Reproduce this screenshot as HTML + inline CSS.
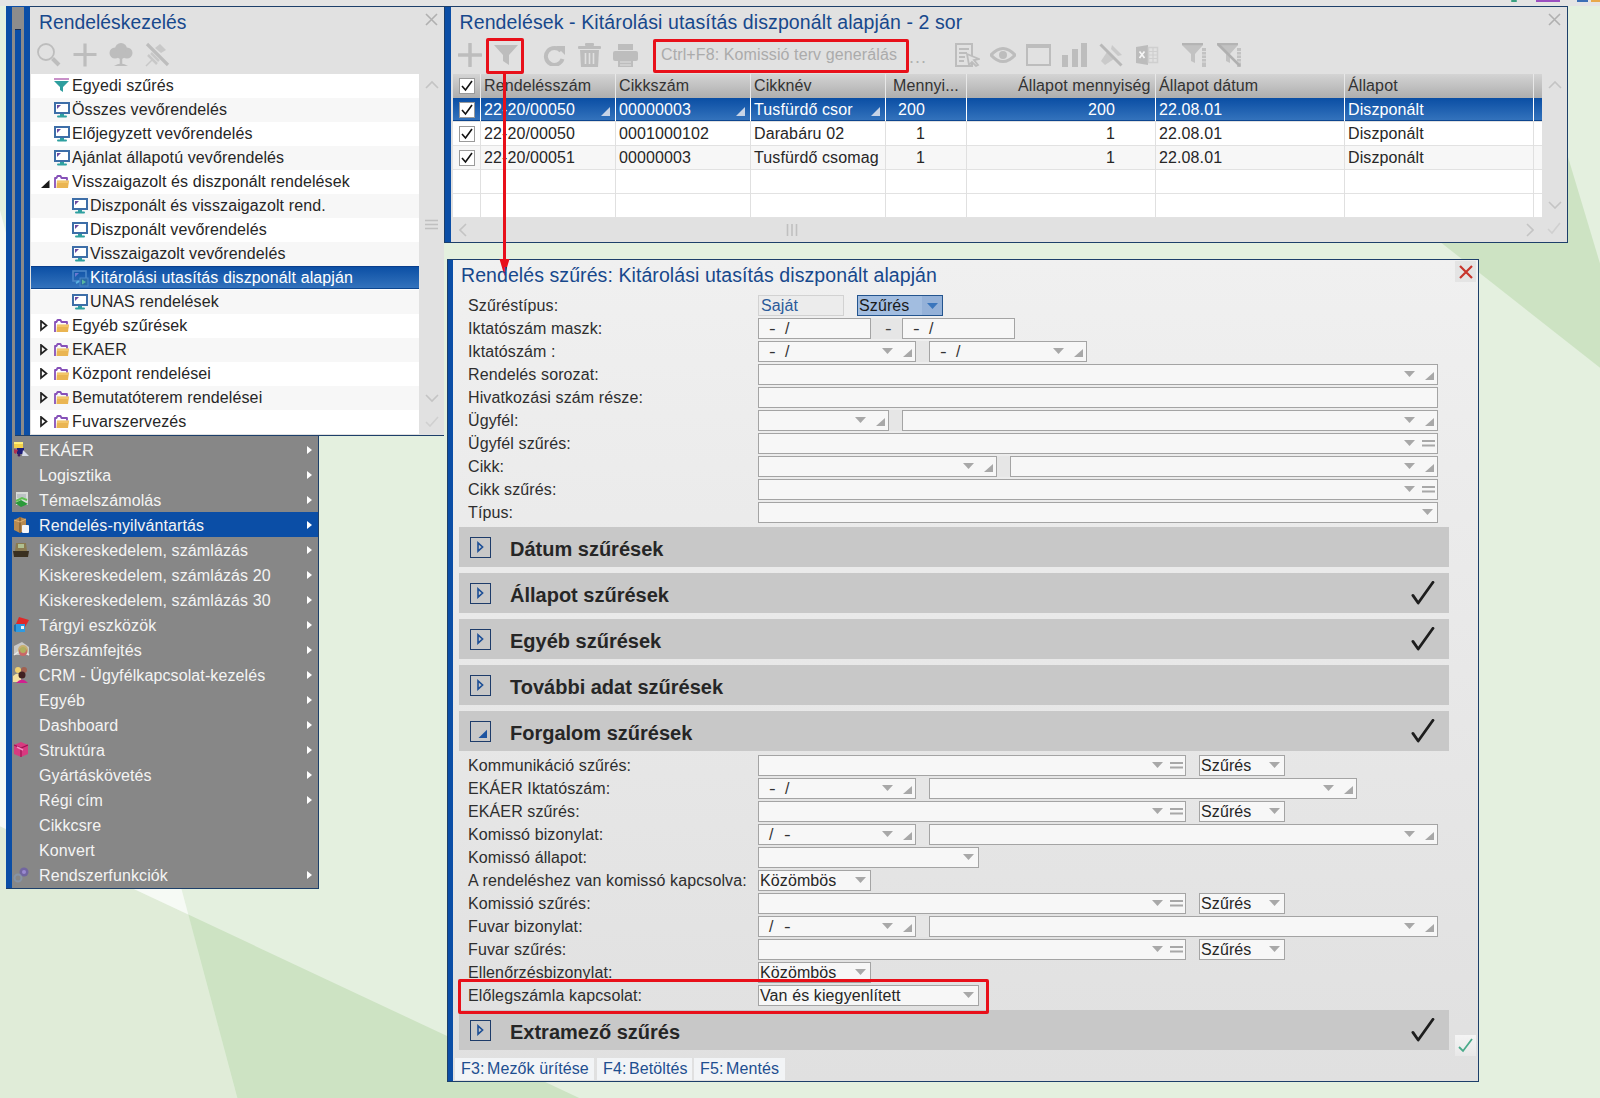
<!DOCTYPE html>
<html><head><meta charset="utf-8"><style>
html,body{margin:0;padding:0;}
body{width:1600px;height:1098px;overflow:hidden;position:relative;font-family:"Liberation Sans", sans-serif;background:#e2eedb;}
.t{position:absolute;white-space:nowrap;line-height:1;letter-spacing:0.11px;}
.r{position:absolute;display:block;}
</style></head><body>
<svg class="r" style="left:0;top:0" width="1600" height="1098" viewBox="0 0 1600 1098"><rect width="1600" height="1098" fill="#e4f0df"/><polygon points="188.3,914.6 0,826.3 0,1098 237.3,1098" fill="#e0ecd8"/><polygon points="188.3,914.6 0,826.3 0,210.4" fill="#f6faf5"/><polygon points="188.3,914.6 1600,1577 291.4,1300" fill="#cde3c3"/><polygon points="1641,400 1200,53 1200,-1068" fill="#cde3c3"/></svg>
<div class="r" style="left:0px;top:0px;width:1600px;height:6px;background:#e4e4e4"></div>
<div class="r" style="left:1511px;top:0px;width:6px;height:2px;background:#3aa080;border-radius:3px"></div>
<div class="r" style="left:1536px;top:0px;width:24px;height:2px;background:#9b4fc0"></div>
<div class="r" style="left:1577px;top:0px;width:11px;height:2px;background:#3b6fb6"></div>
<div class="r" style="left:1591px;top:0px;width:9px;height:2px;background:#e8a84a"></div>
<div class="r" style="left:6px;top:6px;width:6px;height:882px;background:#0b4ea6"></div>
<div class="r" style="left:12px;top:6px;width:18px;height:430px;background:#0b4ea6"></div>
<div class="r" style="left:12px;top:7px;width:12px;height:22px;background:#8c8c8c"></div>
<div class="r" style="left:12px;top:29px;width:3px;height:407px;background:#8a8a8a"></div>
<div class="r" style="left:21px;top:29px;width:3px;height:407px;background:#8a8a8a"></div>
<div class="r" style="left:15px;top:29px;width:6px;height:1px;background:#1a2f50"></div>
<div class="r" style="left:30px;top:6px;width:414px;height:1px;background:#1d3f6a"></div>
<div class="r" style="left:30px;top:7px;width:414px;height:428px;background:#e1e1e1"></div>
<div class="r" style="left:15px;top:435px;width:429px;height:1px;background:#1d3f6a"></div>
<div class="t" style="left:39px;top:13.16px;font-size:19.3px;color:#17488c;letter-spacing:0.04px">Rendeléskezelés</div>
<svg class="r" style="left:425px;top:13px;" width="13" height="13" viewBox="0 0 13 13"><path d="M1 1L12 12M12 1L1 12" stroke="#b0b0b0" stroke-width="1.6"/></svg>
<svg class="r" style="left:36px;top:42px;" width="26" height="26" viewBox="0 0 26 26"><circle cx="10" cy="10" r="8" fill="none" stroke="#bdbdbd" stroke-width="1.8"/><path d="M16.5 16.5L23 23" stroke="#bdbdbd" stroke-width="4"/></svg>
<svg class="r" style="left:73px;top:43px;" width="24" height="24" viewBox="0 0 24 24"><path d="M12 0.5V23.5M0.5 11.5H23.5" stroke="#bdbdbd" stroke-width="3.2"/></svg>
<svg class="r" style="left:108px;top:42px;" width="26" height="25" viewBox="0 0 26 25"><circle cx="13" cy="7" r="6" fill="#bdbdbd"/><circle cx="7" cy="11" r="5.5" fill="#bdbdbd"/><circle cx="19" cy="11" r="5.5" fill="#bdbdbd"/><circle cx="13" cy="12" r="5" fill="#bdbdbd"/><path d="M13 12V23" stroke="#bdbdbd" stroke-width="2.5"/><path d="M6 24Q13 19 20 24Z" fill="#bdbdbd"/></svg>
<svg class="r" style="left:144px;top:42px;" width="26" height="26" viewBox="0 0 26 26"><path d="M3 2L24 23" stroke="#bdbdbd" stroke-width="3.2"/><path d="M16 2L22 8L17 11L11 6Z" fill="#c8c8c8"/><path d="M4 13L13 22M7 11L15 19" stroke="#c8c8c8" stroke-width="2.5"/><path d="M2 24L8 18" stroke="#c8c8c8" stroke-width="1.5"/></svg>
<div class="r" style="left:31px;top:74px;width:388px;height:360px;background:#ffffff"></div>
<div class="r" style="left:419px;top:74px;width:25px;height:361px;background:#e1e1e1"></div>
<svg class="r" style="left:425px;top:80px;" width="14" height="9" viewBox="0 0 14 9"><path d="M1 8L7 2L13 8" fill="none" stroke="#c4c4c4" stroke-width="1.6"/></svg>
<svg class="r" style="left:425px;top:219px;" width="13" height="11" viewBox="0 0 13 11"><path d="M0 1.5H13M0 5.5H13M0 9.5H13" stroke="#c0c0c0" stroke-width="1.6"/></svg>
<svg class="r" style="left:425px;top:394px;" width="14" height="9" viewBox="0 0 14 9"><path d="M1 1L7 7L13 1" fill="none" stroke="#c4c4c4" stroke-width="1.6"/></svg>
<svg class="r" style="left:425px;top:416px;" width="14" height="12" viewBox="0 0 14 12"><path d="M1 6L5 10L13 1" fill="none" stroke="#d0d0d0" stroke-width="1.6"/></svg>
<svg class="r" style="left:54px;top:78px;" width="15" height="15" viewBox="0 0 15 15"><rect x="0" y="0" width="15" height="2" fill="#c890c8"/><path d="M0 3H15L9 9V14L6 12V9Z" fill="#2e9e9e"/></svg>
<div class="t" style="left:72px;top:78.16px;font-size:16px;color:#262626;">Egyedi szűrés</div>
<div class="r" style="left:31px;top:98px;width:388px;height:24px;background:#f7f7f7"></div>
<svg class="r" style="left:54px;top:102px;" width="16" height="16" viewBox="0 0 16 16"><rect x="1" y="1" width="14" height="10" fill="#fff" stroke="#3d6ea8" stroke-width="2"/><path d="M3 3H7L3 7Z" fill="#6a4aa0"/><rect x="6" y="12" width="4" height="2" fill="#2ea0a0"/><rect x="3" y="13.5" width="10" height="2" rx="1" fill="#2ea0a0"/></svg>
<div class="t" style="left:72px;top:102.16px;font-size:16px;color:#262626;">Összes vevőrendelés</div>
<svg class="r" style="left:54px;top:126px;" width="16" height="16" viewBox="0 0 16 16"><rect x="1" y="1" width="14" height="10" fill="#fff" stroke="#3d6ea8" stroke-width="2"/><path d="M3 3H7L3 7Z" fill="#6a4aa0"/><rect x="6" y="12" width="4" height="2" fill="#2ea0a0"/><rect x="3" y="13.5" width="10" height="2" rx="1" fill="#2ea0a0"/></svg>
<div class="t" style="left:72px;top:126.16px;font-size:16px;color:#262626;">Előjegyzett vevőrendelés</div>
<div class="r" style="left:31px;top:146px;width:388px;height:24px;background:#f7f7f7"></div>
<svg class="r" style="left:54px;top:150px;" width="16" height="16" viewBox="0 0 16 16"><rect x="1" y="1" width="14" height="10" fill="#fff" stroke="#3d6ea8" stroke-width="2"/><path d="M3 3H7L3 7Z" fill="#6a4aa0"/><rect x="6" y="12" width="4" height="2" fill="#2ea0a0"/><rect x="3" y="13.5" width="10" height="2" rx="1" fill="#2ea0a0"/></svg>
<div class="t" style="left:72px;top:150.16px;font-size:16px;color:#262626;">Ajánlat állapotú vevőrendelés</div>
<svg class="r" style="left:54px;top:175px;" width="16" height="14" viewBox="0 0 16 14"><path d="M1 13V3H2.5L3.5 1H6.5L7.5 3H13V5.5" fill="none" stroke="#8650b8" stroke-width="1.8" stroke-linejoin="round"/><path d="M3 5.5H15L14 13H2.5Z" fill="#eab552"/><path d="M3 6H14.5L14.2 8H3Z" fill="#f2c66a"/></svg>
<svg class="r" style="left:41px;top:180px;" width="9" height="8" viewBox="0 0 9 8"><path d="M8.5 0V8H0Z" fill="#1a1a1a"/></svg>
<div class="t" style="left:72px;top:174.16px;font-size:16px;color:#262626;">Visszaigazolt és diszponált rendelések</div>
<div class="r" style="left:31px;top:194px;width:388px;height:24px;background:#f7f7f7"></div>
<svg class="r" style="left:72px;top:198px;" width="16" height="16" viewBox="0 0 16 16"><rect x="1" y="1" width="14" height="10" fill="#fff" stroke="#3d6ea8" stroke-width="2"/><path d="M3 3H7L3 7Z" fill="#6a4aa0"/><rect x="6" y="12" width="4" height="2" fill="#2ea0a0"/><rect x="3" y="13.5" width="10" height="2" rx="1" fill="#2ea0a0"/></svg>
<div class="t" style="left:90px;top:198.16px;font-size:16px;color:#262626;">Diszponált és visszaigazolt rend.</div>
<svg class="r" style="left:72px;top:222px;" width="16" height="16" viewBox="0 0 16 16"><rect x="1" y="1" width="14" height="10" fill="#fff" stroke="#3d6ea8" stroke-width="2"/><path d="M3 3H7L3 7Z" fill="#6a4aa0"/><rect x="6" y="12" width="4" height="2" fill="#2ea0a0"/><rect x="3" y="13.5" width="10" height="2" rx="1" fill="#2ea0a0"/></svg>
<div class="t" style="left:90px;top:222.16px;font-size:16px;color:#262626;">Diszponált vevőrendelés</div>
<div class="r" style="left:31px;top:242px;width:388px;height:24px;background:#f7f7f7"></div>
<svg class="r" style="left:72px;top:246px;" width="16" height="16" viewBox="0 0 16 16"><rect x="1" y="1" width="14" height="10" fill="#fff" stroke="#3d6ea8" stroke-width="2"/><path d="M3 3H7L3 7Z" fill="#6a4aa0"/><rect x="6" y="12" width="4" height="2" fill="#2ea0a0"/><rect x="3" y="13.5" width="10" height="2" rx="1" fill="#2ea0a0"/></svg>
<div class="t" style="left:90px;top:246.16px;font-size:16px;color:#262626;">Visszaigazolt vevőrendelés</div>
<div class="r" style="left:31px;top:266px;width:388px;height:23px;background:linear-gradient(#0a4ea4,#3574bd)"></div>
<div class="r" style="left:31px;top:266px;width:388px;height:1px;background:#0a3f8c"></div>
<div class="r" style="left:31px;top:288px;width:388px;height:1px;background:#0d468f"></div>
<svg class="r" style="left:72px;top:270px;" width="17" height="17" viewBox="0 0 17 17"><rect x="1" y="1" width="13" height="10" fill="none" stroke="#4a86c8" stroke-width="1.6"/><path d="M3 3H7L3 7Z" fill="#6a78d0"/><path d="M4 13Q6 12 7 11" stroke="#5ab0e0" stroke-width="2" fill="none"/><rect x="8" y="8" width="8" height="8" fill="#2a6aa8" stroke="#4a86c8" stroke-width="1"/><path d="M10 9.5L14 12L10 14.5Z" fill="#5ab8a0"/></svg>
<div class="t" style="left:90px;top:270.16px;font-size:16px;color:#ffffff;">Kitárolási utasítás diszponált alapján</div>
<div class="r" style="left:31px;top:290px;width:388px;height:24px;background:#f7f7f7"></div>
<svg class="r" style="left:72px;top:294px;" width="16" height="16" viewBox="0 0 16 16"><rect x="1" y="1" width="14" height="10" fill="#fff" stroke="#3d6ea8" stroke-width="2"/><path d="M3 3H7L3 7Z" fill="#6a4aa0"/><rect x="6" y="12" width="4" height="2" fill="#2ea0a0"/><rect x="3" y="13.5" width="10" height="2" rx="1" fill="#2ea0a0"/></svg>
<div class="t" style="left:90px;top:294.16px;font-size:16px;color:#262626;">UNAS rendelések</div>
<svg class="r" style="left:54px;top:319px;" width="16" height="14" viewBox="0 0 16 14"><path d="M1 13V3H2.5L3.5 1H6.5L7.5 3H13V5.5" fill="none" stroke="#8650b8" stroke-width="1.8" stroke-linejoin="round"/><path d="M3 5.5H15L14 13H2.5Z" fill="#eab552"/><path d="M3 6H14.5L14.2 8H3Z" fill="#f2c66a"/></svg>
<svg class="r" style="left:40px;top:320px;" width="8" height="12" viewBox="0 0 8 12"><path d="M1 1L6.5 5.5L1 10Z" fill="none" stroke="#222" stroke-width="1.7" stroke-linejoin="miter"/></svg>
<div class="t" style="left:72px;top:318.16px;font-size:16px;color:#262626;">Egyéb szűrések</div>
<div class="r" style="left:31px;top:338px;width:388px;height:24px;background:#f7f7f7"></div>
<svg class="r" style="left:54px;top:343px;" width="16" height="14" viewBox="0 0 16 14"><path d="M1 13V3H2.5L3.5 1H6.5L7.5 3H13V5.5" fill="none" stroke="#8650b8" stroke-width="1.8" stroke-linejoin="round"/><path d="M3 5.5H15L14 13H2.5Z" fill="#eab552"/><path d="M3 6H14.5L14.2 8H3Z" fill="#f2c66a"/></svg>
<svg class="r" style="left:40px;top:344px;" width="8" height="12" viewBox="0 0 8 12"><path d="M1 1L6.5 5.5L1 10Z" fill="none" stroke="#222" stroke-width="1.7" stroke-linejoin="miter"/></svg>
<div class="t" style="left:72px;top:342.16px;font-size:16px;color:#262626;">EKAER</div>
<svg class="r" style="left:54px;top:367px;" width="16" height="14" viewBox="0 0 16 14"><path d="M1 13V3H2.5L3.5 1H6.5L7.5 3H13V5.5" fill="none" stroke="#8650b8" stroke-width="1.8" stroke-linejoin="round"/><path d="M3 5.5H15L14 13H2.5Z" fill="#eab552"/><path d="M3 6H14.5L14.2 8H3Z" fill="#f2c66a"/></svg>
<svg class="r" style="left:40px;top:368px;" width="8" height="12" viewBox="0 0 8 12"><path d="M1 1L6.5 5.5L1 10Z" fill="none" stroke="#222" stroke-width="1.7" stroke-linejoin="miter"/></svg>
<div class="t" style="left:72px;top:366.16px;font-size:16px;color:#262626;">Központ rendelései</div>
<div class="r" style="left:31px;top:386px;width:388px;height:24px;background:#f7f7f7"></div>
<svg class="r" style="left:54px;top:391px;" width="16" height="14" viewBox="0 0 16 14"><path d="M1 13V3H2.5L3.5 1H6.5L7.5 3H13V5.5" fill="none" stroke="#8650b8" stroke-width="1.8" stroke-linejoin="round"/><path d="M3 5.5H15L14 13H2.5Z" fill="#eab552"/><path d="M3 6H14.5L14.2 8H3Z" fill="#f2c66a"/></svg>
<svg class="r" style="left:40px;top:392px;" width="8" height="12" viewBox="0 0 8 12"><path d="M1 1L6.5 5.5L1 10Z" fill="none" stroke="#222" stroke-width="1.7" stroke-linejoin="miter"/></svg>
<div class="t" style="left:72px;top:390.16px;font-size:16px;color:#262626;">Bemutatóterem rendelései</div>
<svg class="r" style="left:54px;top:415px;" width="16" height="14" viewBox="0 0 16 14"><path d="M1 13V3H2.5L3.5 1H6.5L7.5 3H13V5.5" fill="none" stroke="#8650b8" stroke-width="1.8" stroke-linejoin="round"/><path d="M3 5.5H15L14 13H2.5Z" fill="#eab552"/><path d="M3 6H14.5L14.2 8H3Z" fill="#f2c66a"/></svg>
<svg class="r" style="left:40px;top:416px;" width="8" height="12" viewBox="0 0 8 12"><path d="M1 1L6.5 5.5L1 10Z" fill="none" stroke="#222" stroke-width="1.7" stroke-linejoin="miter"/></svg>
<div class="t" style="left:72px;top:414.16px;font-size:16px;color:#262626;">Fuvarszervezés</div>
<div class="r" style="left:12px;top:436px;width:306px;height:452px;background:#878787"></div>
<div class="r" style="left:318px;top:436px;width:1px;height:452px;background:#1d3f6a"></div>
<div class="r" style="left:6px;top:888px;width:313px;height:1px;background:#1d3f6a"></div>
<svg class="r" style="left:13px;top:441px;" width="17" height="18" viewBox="0 0 17 18"><rect x="1" y="1" width="9" height="6" fill="#f2d04a"/><rect x="1" y="1" width="9" height="2" fill="#fff07a"/><path d="M4 7H11V13H4Z" fill="#1c1c78"/><path d="M1 8L5 9L3 13L1 12Z" fill="#b03050"/><path d="M10 9L16 15H9Z" fill="#d8dce8"/><circle cx="6" cy="14" r="1.5" fill="#402060"/></svg>
<div class="t" style="left:39px;top:443.46px;font-size:16px;color:#f4f4f4;">EKÁER</div>
<svg class="r" style="left:307px;top:446px;" width="6" height="8" viewBox="0 0 6 8"><path d="M0 0L5 4L0 8Z" fill="#ffffff"/></svg>
<div class="t" style="left:39px;top:468.46px;font-size:16px;color:#f4f4f4;">Logisztika</div>
<svg class="r" style="left:307px;top:471px;" width="6" height="8" viewBox="0 0 6 8"><path d="M0 0L5 4L0 8Z" fill="#ffffff"/></svg>
<svg class="r" style="left:13px;top:491px;" width="17" height="18" viewBox="0 0 17 18"><rect x="3" y="1" width="12" height="13" fill="#d8dcd8"/><path d="M4 4H13M4 6H13" stroke="#a0a8b0" stroke-width="1"/><path d="M2 12L8 9L15 13L8 16Z" fill="#2a9a3a"/><path d="M3 10L9 7L14 9" fill="none" stroke="#60c050" stroke-width="2"/></svg>
<div class="t" style="left:39px;top:493.46px;font-size:16px;color:#f4f4f4;">Témaelszámolás</div>
<svg class="r" style="left:307px;top:496px;" width="6" height="8" viewBox="0 0 6 8"><path d="M0 0L5 4L0 8Z" fill="#ffffff"/></svg>
<div class="r" style="left:12px;top:512px;width:306px;height:25px;background:#0b4ea6"></div>
<svg class="r" style="left:13px;top:516px;" width="17" height="18" viewBox="0 0 17 18"><path d="M1 4L7 1L13 3V14L7 17L1 14Z" fill="#b88a50"/><path d="M7 1V17" stroke="#8a6030" stroke-width="1.5"/><path d="M1 4L7 6L13 3" fill="none" stroke="#e0b070" stroke-width="1"/><rect x="9" y="9" width="7" height="8" rx="1" fill="#f4f4f8"/></svg>
<div class="t" style="left:39px;top:518.46px;font-size:16px;color:#f4f4f4;">Rendelés-nyilvántartás</div>
<svg class="r" style="left:307px;top:521px;" width="6" height="8" viewBox="0 0 6 8"><path d="M0 0L5 4L0 8Z" fill="#ffffff"/></svg>
<svg class="r" style="left:13px;top:541px;" width="17" height="18" viewBox="0 0 17 18"><path d="M3 2H13L14 10H2Z" fill="#8a7a50"/><rect x="5" y="3" width="6" height="4" fill="#b0c090"/><path d="M0 10H16L15 16H1Z" fill="#3a3020"/></svg>
<div class="t" style="left:39px;top:543.46px;font-size:16px;color:#f4f4f4;">Kiskereskedelem, számlázás</div>
<svg class="r" style="left:307px;top:546px;" width="6" height="8" viewBox="0 0 6 8"><path d="M0 0L5 4L0 8Z" fill="#ffffff"/></svg>
<div class="t" style="left:39px;top:568.46px;font-size:16px;color:#f4f4f4;">Kiskereskedelem, számlázás 20</div>
<svg class="r" style="left:307px;top:571px;" width="6" height="8" viewBox="0 0 6 8"><path d="M0 0L5 4L0 8Z" fill="#ffffff"/></svg>
<div class="t" style="left:39px;top:593.46px;font-size:16px;color:#f4f4f4;">Kiskereskedelem, számlázás 30</div>
<svg class="r" style="left:307px;top:596px;" width="6" height="8" viewBox="0 0 6 8"><path d="M0 0L5 4L0 8Z" fill="#ffffff"/></svg>
<svg class="r" style="left:13px;top:616px;" width="17" height="18" viewBox="0 0 17 18"><path d="M6 1L16 4L12 11L3 8Z" fill="#e02828"/><path d="M3 8H12V16H3Z" fill="#2f9ae0"/><path d="M1 9L3 8V16L1 15Z" fill="#1870b0"/><rect x="8" y="10" width="3" height="3" fill="#f0f0f0"/></svg>
<div class="t" style="left:39px;top:618.46px;font-size:16px;color:#f4f4f4;">Tárgyi eszközök</div>
<svg class="r" style="left:307px;top:621px;" width="6" height="8" viewBox="0 0 6 8"><path d="M0 0L5 4L0 8Z" fill="#ffffff"/></svg>
<svg class="r" style="left:13px;top:641px;" width="17" height="18" viewBox="0 0 17 18"><path d="M1 5L9 1L16 6V14H1Z" fill="#c8c8c8"/><path d="M1 14L8 9L16 14" fill="none" stroke="#e8e8e8" stroke-width="1.5"/><circle cx="10" cy="9" r="5" fill="#c8b070"/><circle cx="10" cy="11" r="4" fill="#c86868"/><circle cx="10" cy="9" r="3" fill="#b0b060"/></svg>
<div class="t" style="left:39px;top:643.46px;font-size:16px;color:#f4f4f4;">Bérszámfejtés</div>
<svg class="r" style="left:307px;top:646px;" width="6" height="8" viewBox="0 0 6 8"><path d="M0 0L5 4L0 8Z" fill="#ffffff"/></svg>
<svg class="r" style="left:13px;top:666px;" width="17" height="18" viewBox="0 0 17 18"><circle cx="5" cy="4" r="3" fill="#f0d070"/><circle cx="11" cy="4" r="3" fill="#a06050"/><path d="M0 10Q5 5 8 10V16H0Z" fill="#f4e0a0"/><circle cx="9" cy="9" r="3.5" fill="#402020"/><path d="M3 17Q9 10 15 17Z" fill="#d02090"/></svg>
<div class="t" style="left:39px;top:668.46px;font-size:16px;color:#f4f4f4;">CRM - Ügyfélkapcsolat-kezelés</div>
<svg class="r" style="left:307px;top:671px;" width="6" height="8" viewBox="0 0 6 8"><path d="M0 0L5 4L0 8Z" fill="#ffffff"/></svg>
<div class="t" style="left:39px;top:693.46px;font-size:16px;color:#f4f4f4;">Egyéb</div>
<svg class="r" style="left:307px;top:696px;" width="6" height="8" viewBox="0 0 6 8"><path d="M0 0L5 4L0 8Z" fill="#ffffff"/></svg>
<div class="t" style="left:39px;top:718.46px;font-size:16px;color:#f4f4f4;">Dashboard</div>
<svg class="r" style="left:307px;top:721px;" width="6" height="8" viewBox="0 0 6 8"><path d="M0 0L5 4L0 8Z" fill="#ffffff"/></svg>
<svg class="r" style="left:13px;top:741px;" width="17" height="18" viewBox="0 0 17 18"><path d="M8 1L15 4V13L8 16L1 13V4Z" fill="#d83a80"/><path d="M1 4L8 7L15 4M8 7V16" fill="none" stroke="#a01050" stroke-width="1.2"/><path d="M4 6L10 9" stroke="#f090c0" stroke-width="1.5"/></svg>
<div class="t" style="left:39px;top:743.46px;font-size:16px;color:#f4f4f4;">Struktúra</div>
<svg class="r" style="left:307px;top:746px;" width="6" height="8" viewBox="0 0 6 8"><path d="M0 0L5 4L0 8Z" fill="#ffffff"/></svg>
<div class="t" style="left:39px;top:768.46px;font-size:16px;color:#f4f4f4;">Gyártáskövetés</div>
<svg class="r" style="left:307px;top:771px;" width="6" height="8" viewBox="0 0 6 8"><path d="M0 0L5 4L0 8Z" fill="#ffffff"/></svg>
<div class="t" style="left:39px;top:793.46px;font-size:16px;color:#f4f4f4;">Régi cím</div>
<svg class="r" style="left:307px;top:796px;" width="6" height="8" viewBox="0 0 6 8"><path d="M0 0L5 4L0 8Z" fill="#ffffff"/></svg>
<div class="t" style="left:39px;top:818.46px;font-size:16px;color:#f4f4f4;">Cikkcsre</div>
<div class="t" style="left:39px;top:843.46px;font-size:16px;color:#f4f4f4;">Konvert</div>
<svg class="r" style="left:13px;top:866px;" width="17" height="18" viewBox="0 0 17 18"><circle cx="11" cy="6" r="4.5" fill="#6a5aa8" opacity="0.75"/><circle cx="11" cy="6" r="2" fill="#9a8ad0"/><circle cx="5" cy="12" r="3.5" fill="none" stroke="#8898b0" stroke-width="2" opacity="0.7"/></svg>
<div class="t" style="left:39px;top:868.46px;font-size:16px;color:#f4f4f4;">Rendszerfunkciók</div>
<svg class="r" style="left:307px;top:871px;" width="6" height="8" viewBox="0 0 6 8"><path d="M0 0L5 4L0 8Z" fill="#ffffff"/></svg>
<div class="r" style="left:444px;top:6px;width:1124px;height:1px;background:#1d3f6a"></div>
<div class="r" style="left:444px;top:6px;width:1px;height:237px;background:#1d3f6a"></div>
<div class="r" style="left:445px;top:7px;width:6px;height:235px;background:#0b4ea6"></div>
<div class="r" style="left:451px;top:7px;width:1116px;height:235px;background:#e1e1e1"></div>
<div class="r" style="left:1567px;top:6px;width:1px;height:237px;background:#1d3f6a"></div>
<div class="r" style="left:444px;top:242px;width:1124px;height:1px;background:#1d3f6a"></div>
<div class="t" style="left:459.5px;top:12.99px;font-size:19.5px;color:#17488c;">Rendelések - Kitárolási utasítás diszponált alapján - 2 sor</div>
<svg class="r" style="left:1548px;top:13px;" width="13" height="13" viewBox="0 0 13 13"><path d="M1 1L12 12M12 1L1 12" stroke="#b0b0b0" stroke-width="1.6"/></svg>
<svg class="r" style="left:458px;top:43px;" width="24" height="24" viewBox="0 0 24 24"><path d="M12 1V23M1 12H23" stroke="#bdbdbd" stroke-width="3.5" stroke-linecap="round"/></svg>
<svg class="r" style="left:493px;top:44px;" width="26" height="22" viewBox="0 0 26 22"><path d="M1 1H25L16 11V21L10 17V11Z" fill="#bdbdbd"/></svg>
<svg class="r" style="left:543px;top:45px;" width="23" height="21" viewBox="0 0 23 21"><path d="M18 6A8.5 8.5 0 1 0 19.5 14" fill="none" stroke="#bdbdbd" stroke-width="4"/><path d="M13 1H22V10Z" fill="#bdbdbd"/></svg>
<svg class="r" style="left:577px;top:43px;" width="25" height="24" viewBox="0 0 25 24"><rect x="1" y="3" width="23" height="3" rx="1" fill="#bdbdbd"/><rect x="8" y="0" width="9" height="3" rx="1" fill="#bdbdbd"/><path d="M3 7H22L21 24H4Z" fill="#bdbdbd"/><path d="M8.5 10V21M12.5 10V21M16.5 10V21" stroke="#e1e1e1" stroke-width="1.6"/></svg>
<svg class="r" style="left:613px;top:44px;" width="25" height="23" viewBox="0 0 25 23"><rect x="5" y="0" width="15" height="6" fill="#bdbdbd"/><rect x="0" y="7" width="25" height="10" rx="2" fill="#bdbdbd"/><rect x="5" y="14" width="15" height="9" fill="#bdbdbd"/><path d="M7 18H18M7 21H18" stroke="#e1e1e1" stroke-width="1.2"/></svg>
<div class="r" style="left:486px;top:38px;width:38px;height:36px;border:3px solid #e8101a;box-sizing:border-box;border-radius:2px"></div>
<div class="r" style="left:653px;top:39px;width:256px;height:34px;border:3px solid #e8101a;box-sizing:border-box;border-radius:2px"></div>
<div class="t" style="left:661px;top:47.46px;font-size:16px;color:#ababab;">Ctrl+F8: Komissió terv generálás</div>
<div class="t" style="left:909px;top:47.76px;font-size:18px;color:#b0b0b0;letter-spacing:1px">...</div>
<svg class="r" style="left:955px;top:43px;" width="25" height="24" viewBox="0 0 25 24"><rect x="1" y="1" width="16" height="22" fill="none" stroke="#bdbdbd" stroke-width="2"/><path d="M4 6H14M4 10H12M4 14H10M4 18H9" stroke="#bdbdbd" stroke-width="2"/><path d="M12 11L24 16L19 17L23 22L21 23L17 19L14 22Z" fill="#e1e1e1" stroke="#bdbdbd" stroke-width="1.8"/></svg>
<svg class="r" style="left:990px;top:45px;" width="26" height="20" viewBox="0 0 26 20"><path d="M1 10Q13 -3 25 10Q13 23 1 10Z" fill="none" stroke="#bdbdbd" stroke-width="3"/><circle cx="13" cy="10" r="4" fill="#bdbdbd"/></svg>
<svg class="r" style="left:1026px;top:44px;" width="25" height="22" viewBox="0 0 25 22"><rect x="1" y="1" width="23" height="20" fill="none" stroke="#bdbdbd" stroke-width="2"/><rect x="1" y="1" width="23" height="3" fill="#bdbdbd"/></svg>
<svg class="r" style="left:1062px;top:43px;" width="26" height="24" viewBox="0 0 26 24"><rect x="0" y="12" width="6" height="12" fill="#bdbdbd"/><rect x="10" y="6" width="6" height="18" fill="#bdbdbd"/><rect x="19" y="0" width="6" height="24" fill="#bdbdbd"/></svg>
<svg class="r" style="left:1099px;top:43px;" width="25" height="24" viewBox="0 0 25 24"><path d="M13 2L23 12L19 13L12 6Z" fill="#cacaca"/><path d="M8 9L15 16L6 22L2 18Z" fill="#cacaca"/><path d="M1.5 1.5L22.5 22.5" stroke="#b8b8b8" stroke-width="3"/></svg>
<svg class="r" style="left:1135px;top:44px;" width="25" height="22" viewBox="0 0 25 22"><path d="M1 3L13 1V21L1 19Z" fill="#bcbcbc"/><path d="M4.5 7.5L9.5 14M9.5 7.5L4.5 14" stroke="#f6f6f6" stroke-width="1.7"/><rect x="13.5" y="3.5" width="9" height="15" fill="none" stroke="#cfcfcf" stroke-width="1.5"/><path d="M13 7.5H23M13 11H23M13 14.5H23M18 3V19" stroke="#cfcfcf" stroke-width="1.2"/></svg>
<svg class="r" style="left:1182px;top:43px;" width="25" height="25" viewBox="0 0 25 25"><path d="M0 2H21L13 11V20L9 18V11Z" fill="#c2c2c2"/><rect x="0" y="0" width="21" height="2.2" fill="#b4b4b4"/><rect x="20" y="5" width="4" height="19" fill="#c2c2c2"/><path d="M20 8.5H24M20 12H24M20 15.5H24M20 19H24" stroke="#dedede" stroke-width="1"/></svg>
<svg class="r" style="left:1217px;top:43px;" width="25" height="25" viewBox="0 0 25 25"><path d="M0 2H21L13 11V20L9 18V11Z" fill="#c2c2c2"/><rect x="0" y="0" width="21" height="2.2" fill="#b4b4b4"/><rect x="20" y="5" width="4" height="19" fill="#c2c2c2"/><path d="M20 8.5H24M20 12H24M20 15.5H24M20 19H24" stroke="#dedede" stroke-width="1"/><path d="M1 1L23 23" stroke="#b0b0b0" stroke-width="2.5"/></svg>
<div class="r" style="left:453px;top:74px;width:1089px;height:24px;background:linear-gradient(#d4d4d4,#aeaeae)"></div>
<div class="r" style="left:480px;top:74px;width:1px;height:24px;background:#e8e8e8"></div>
<div class="r" style="left:615px;top:74px;width:1px;height:24px;background:#e8e8e8"></div>
<div class="r" style="left:750px;top:74px;width:1px;height:24px;background:#e8e8e8"></div>
<div class="r" style="left:885px;top:74px;width:1px;height:24px;background:#e8e8e8"></div>
<div class="r" style="left:966px;top:74px;width:1px;height:24px;background:#e8e8e8"></div>
<div class="r" style="left:1155px;top:74px;width:1px;height:24px;background:#e8e8e8"></div>
<div class="r" style="left:1344px;top:74px;width:1px;height:24px;background:#e8e8e8"></div>
<div class="r" style="left:1533px;top:74px;width:1px;height:24px;background:#e8e8e8"></div>
<div class="r" style="left:453px;top:98px;width:1089px;height:23px;background:linear-gradient(#0a4ea4,#3574bd)"></div>
<div class="r" style="left:453px;top:120px;width:1089px;height:1px;background:#0d468f"></div>
<div class="r" style="left:453px;top:122px;width:1089px;height:24px;background:#ffffff"></div>
<div class="r" style="left:453px;top:145px;width:1089px;height:1px;background:#e2e2e2"></div>
<div class="r" style="left:453px;top:146px;width:1089px;height:24px;background:#f7f7f7"></div>
<div class="r" style="left:453px;top:169px;width:1089px;height:1px;background:#e2e2e2"></div>
<div class="r" style="left:453px;top:170px;width:1089px;height:24px;background:#ffffff"></div>
<div class="r" style="left:453px;top:193px;width:1089px;height:1px;background:#e2e2e2"></div>
<div class="r" style="left:453px;top:194px;width:1089px;height:24px;background:#ffffff"></div>
<div class="r" style="left:453px;top:217px;width:1089px;height:1px;background:#e2e2e2"></div>
<div class="r" style="left:480px;top:98px;width:1px;height:119px;background:#e0e0e0"></div>
<div class="r" style="left:615px;top:98px;width:1px;height:119px;background:#e0e0e0"></div>
<div class="r" style="left:750px;top:98px;width:1px;height:119px;background:#e0e0e0"></div>
<div class="r" style="left:885px;top:98px;width:1px;height:119px;background:#e0e0e0"></div>
<div class="r" style="left:966px;top:98px;width:1px;height:119px;background:#e0e0e0"></div>
<div class="r" style="left:1155px;top:98px;width:1px;height:119px;background:#e0e0e0"></div>
<div class="r" style="left:1344px;top:98px;width:1px;height:119px;background:#e0e0e0"></div>
<div class="r" style="left:1533px;top:98px;width:1px;height:119px;background:#e0e0e0"></div>
<div class="r" style="left:480px;top:98px;width:1px;height:23px;background:#ffffff"></div>
<div class="r" style="left:615px;top:98px;width:1px;height:23px;background:#ffffff"></div>
<div class="r" style="left:750px;top:98px;width:1px;height:23px;background:#ffffff"></div>
<div class="r" style="left:885px;top:98px;width:1px;height:23px;background:#ffffff"></div>
<div class="r" style="left:966px;top:98px;width:1px;height:23px;background:#ffffff"></div>
<div class="r" style="left:1155px;top:98px;width:1px;height:23px;background:#ffffff"></div>
<div class="r" style="left:1344px;top:98px;width:1px;height:23px;background:#ffffff"></div>
<div class="r" style="left:1533px;top:98px;width:1px;height:23px;background:#ffffff"></div>
<div class="r" style="left:459px;top:78px;width:16px;height:16px;background:#fff;border:1px solid #9a9a9a;box-sizing:border-box"></div>
<svg class="r" style="left:461px;top:80px;" width="12" height="12" viewBox="0 0 12 12"><path d="M1 6L4.5 10L11 1" fill="none" stroke="#111" stroke-width="1.6"/></svg>
<div class="r" style="left:459px;top:102px;width:16px;height:16px;background:#fff;border:1px solid #9a9a9a;box-sizing:border-box"></div>
<svg class="r" style="left:461px;top:104px;" width="12" height="12" viewBox="0 0 12 12"><path d="M1 6L4.5 10L11 1" fill="none" stroke="#111" stroke-width="1.6"/></svg>
<div class="r" style="left:459px;top:126px;width:16px;height:16px;background:#fff;border:1px solid #9a9a9a;box-sizing:border-box"></div>
<svg class="r" style="left:461px;top:128px;" width="12" height="12" viewBox="0 0 12 12"><path d="M1 6L4.5 10L11 1" fill="none" stroke="#111" stroke-width="1.6"/></svg>
<div class="r" style="left:459px;top:150px;width:16px;height:16px;background:#fff;border:1px solid #9a9a9a;box-sizing:border-box"></div>
<svg class="r" style="left:461px;top:152px;" width="12" height="12" viewBox="0 0 12 12"><path d="M1 6L4.5 10L11 1" fill="none" stroke="#111" stroke-width="1.6"/></svg>
<div class="t" style="left:484px;top:78.06px;font-size:16px;color:#333333;">Rendelésszám</div>
<div class="t" style="left:619px;top:78.06px;font-size:16px;color:#333333;">Cikkszám</div>
<div class="t" style="left:754px;top:78.06px;font-size:16px;color:#333333;">Cikknév</div>
<div class="t" style="left:893px;top:78.06px;font-size:16px;color:#333333;">Mennyi...</div>
<div class="t" style="left:1018px;top:78.06px;font-size:16px;color:#333333;">Állapot mennyiség</div>
<div class="t" style="left:1159px;top:78.06px;font-size:16px;color:#333333;">Állapot dátum</div>
<div class="t" style="left:1348px;top:78.06px;font-size:16px;color:#333333;">Állapot</div>
<div class="t" style="left:484px;top:101.96px;font-size:16px;color:#ffffff;">22-20/00050</div>
<div class="t" style="left:619px;top:101.96px;font-size:16px;color:#ffffff;">00000003</div>
<div class="t" style="left:754px;top:101.96px;font-size:16px;color:#ffffff;">Tusfürdő csor</div>
<div class="t" style="left:800px;width:125px;text-align:right;top:101.96px;font-size:16px;color:#ffffff">200</div>
<div class="t" style="left:1000px;width:115px;text-align:right;top:101.96px;font-size:16px;color:#ffffff">200</div>
<div class="t" style="left:1159px;top:101.96px;font-size:16px;color:#ffffff;">22.08.01</div>
<div class="t" style="left:1348px;top:101.96px;font-size:16px;color:#ffffff;">Diszponált</div>
<div class="t" style="left:484px;top:125.96px;font-size:16px;color:#262626;">22-20/00050</div>
<div class="t" style="left:619px;top:125.96px;font-size:16px;color:#262626;">0001000102</div>
<div class="t" style="left:754px;top:125.96px;font-size:16px;color:#262626;">Darabáru 02</div>
<div class="t" style="left:800px;width:125px;text-align:right;top:125.96px;font-size:16px;color:#262626">1</div>
<div class="t" style="left:1000px;width:115px;text-align:right;top:125.96px;font-size:16px;color:#262626">1</div>
<div class="t" style="left:1159px;top:125.96px;font-size:16px;color:#262626;">22.08.01</div>
<div class="t" style="left:1348px;top:125.96px;font-size:16px;color:#262626;">Diszponált</div>
<div class="t" style="left:484px;top:149.96px;font-size:16px;color:#262626;">22-20/00051</div>
<div class="t" style="left:619px;top:149.96px;font-size:16px;color:#262626;">00000003</div>
<div class="t" style="left:754px;top:149.96px;font-size:16px;color:#262626;">Tusfürdő csomag</div>
<div class="t" style="left:800px;width:125px;text-align:right;top:149.96px;font-size:16px;color:#262626">1</div>
<div class="t" style="left:1000px;width:115px;text-align:right;top:149.96px;font-size:16px;color:#262626">1</div>
<div class="t" style="left:1159px;top:149.96px;font-size:16px;color:#262626;">22.08.01</div>
<div class="t" style="left:1348px;top:149.96px;font-size:16px;color:#262626;">Diszponált</div>
<svg class="r" style="left:601px;top:107px;" width="9" height="9" viewBox="0 0 9 9"><path d="M9 0V9H0Z" fill="#c8d4e6"/></svg>
<svg class="r" style="left:736px;top:107px;" width="9" height="9" viewBox="0 0 9 9"><path d="M9 0V9H0Z" fill="#c8d4e6"/></svg>
<svg class="r" style="left:871px;top:107px;" width="9" height="9" viewBox="0 0 9 9"><path d="M9 0V9H0Z" fill="#c8d4e6"/></svg>
<svg class="r" style="left:1548px;top:81px;" width="14" height="8" viewBox="0 0 14 8"><path d="M1 7L7 1L13 7" fill="none" stroke="#c4c4c4" stroke-width="1.6"/></svg>
<svg class="r" style="left:1548px;top:201px;" width="14" height="8" viewBox="0 0 14 8"><path d="M1 1L7 7L13 1" fill="none" stroke="#c4c4c4" stroke-width="1.6"/></svg>
<svg class="r" style="left:459px;top:223px;" width="8" height="14" viewBox="0 0 8 14"><path d="M7 1L1 7L7 13" fill="none" stroke="#c4c4c4" stroke-width="1.6"/></svg>
<svg class="r" style="left:786px;top:224px;" width="12" height="12" viewBox="0 0 12 12"><path d="M1.5 0V12M6 0V12M10.5 0V12" stroke="#c0c0c0" stroke-width="1.6"/></svg>
<svg class="r" style="left:1526px;top:223px;" width="8" height="14" viewBox="0 0 8 14"><path d="M1 1L7 7L1 13" fill="none" stroke="#c4c4c4" stroke-width="1.6"/></svg>
<svg class="r" style="left:1547px;top:221px;" width="14" height="14" viewBox="0 0 14 14"><path d="M1 8L5 12L13 2" fill="none" stroke="#d0d0d0" stroke-width="1.6"/></svg>
<div class="r" style="left:503px;top:73px;width:3px;height:187px;background:#e8101a"></div>
<div class="r" style="left:447px;top:259px;width:1032px;height:1px;background:#1d3f6a"></div>
<div class="r" style="left:447px;top:259px;width:1px;height:823px;background:#1d3f6a"></div>
<div class="r" style="left:448px;top:260px;width:5px;height:821px;background:#0b4ea6"></div>
<div class="r" style="left:453px;top:260px;width:1025px;height:821px;background:linear-gradient(#f0f0f0,#e0e0e0)"></div>
<div class="r" style="left:1478px;top:259px;width:1px;height:823px;background:#1d3f6a"></div>
<div class="r" style="left:447px;top:1081px;width:1032px;height:1px;background:#1d3f6a"></div>
<svg class="r" style="left:499px;top:259px;" width="11" height="17" viewBox="0 0 11 17"><path d="M0.5 0L10.5 0L5.5 17Z" fill="#e8101a"/></svg>
<div class="t" style="left:461px;top:266.49px;font-size:19.5px;color:#17488c;letter-spacing:0.08px">Rendelés szűrés: Kitárolási utasítás diszponált alapján</div>
<div class="r" style="left:1455px;top:261px;width:21px;height:21px;background:#e4e4e4"></div>
<svg class="r" style="left:1459px;top:265px;" width="14" height="14" viewBox="0 0 14 14"><path d="M1 1L13 13M13 1L1 13" stroke="#c8362c" stroke-width="2.2"/></svg>
<div class="t" style="left:468px;top:298.26px;font-size:16px;color:#2e2e2e;">Szűréstípus:</div>
<div class="t" style="left:468px;top:321.26px;font-size:16px;color:#2e2e2e;">Iktatószám maszk:</div>
<div class="t" style="left:468px;top:344.26px;font-size:16px;color:#2e2e2e;">Iktatószám :</div>
<div class="t" style="left:468px;top:367.26px;font-size:16px;color:#2e2e2e;">Rendelés sorozat:</div>
<div class="t" style="left:468px;top:390.26px;font-size:16px;color:#2e2e2e;">Hivatkozási szám része:</div>
<div class="t" style="left:468px;top:413.26px;font-size:16px;color:#2e2e2e;">Ügyfél:</div>
<div class="t" style="left:468px;top:436.26px;font-size:16px;color:#2e2e2e;">Ügyfél szűrés:</div>
<div class="t" style="left:468px;top:459.26px;font-size:16px;color:#2e2e2e;">Cikk:</div>
<div class="t" style="left:468px;top:482.26px;font-size:16px;color:#2e2e2e;">Cikk szűrés:</div>
<div class="t" style="left:468px;top:505.26px;font-size:16px;color:#2e2e2e;">Típus:</div>
<div class="r" style="left:758px;top:295px;width:86px;height:21px;background:#ececec;border:1px solid #d2d2d2;box-sizing:border-box"></div>
<div class="t" style="left:761px;top:298.46px;font-size:16px;color:#2a5a9a;">Saját</div>
<div class="r" style="left:857px;top:295px;width:86px;height:21px;background:#a2bde0;border:1px solid #24558f;box-sizing:border-box"></div>
<div class="r" style="left:922px;top:296px;width:20px;height:19px;background:#94b1d8"></div>
<div class="t" style="left:859px;top:298.46px;font-size:16px;color:#1a1a1a;">Szűrés</div>
<svg class="r" style="left:927px;top:303px;" width="11" height="6" viewBox="0 0 11 6"><path d="M0 0H11L5.5 6Z" fill="#3a76bd"/></svg>
<div class="r" style="left:758px;top:318px;width:113px;height:21px;background:#f7f7f7;border:1px solid #a4a4a4;box-sizing:border-box;"></div>
<div class="t" style="left:769px;top:321.46px;font-size:16px;color:#333;transform:scaleX(1.25);transform-origin:left">-</div>
<div class="t" style="left:785px;top:321.46px;font-size:16px;color:#333;">/</div>
<div class="r" style="left:871px;top:318px;width:31px;height:21px;background:#e6e6e6"></div>
<div class="t" style="left:885px;top:321.46px;font-size:16px;color:#444;transform:scaleX(1.25);transform-origin:left">-</div>
<div class="r" style="left:902px;top:318px;width:113px;height:21px;background:#f7f7f7;border:1px solid #a4a4a4;box-sizing:border-box;"></div>
<div class="t" style="left:913px;top:321.46px;font-size:16px;color:#333;transform:scaleX(1.25);transform-origin:left">-</div>
<div class="t" style="left:929px;top:321.46px;font-size:16px;color:#333;">/</div>
<div class="r" style="left:758px;top:341px;width:158px;height:21px;background:#f7f7f7;border:1px solid #a4a4a4;box-sizing:border-box;"></div>
<svg class="r" style="left:882px;top:348px;" width="11" height="6" viewBox="0 0 11 6"><path d="M0 0H11L5.5 6Z" fill="#a8a8a8"/></svg>
<svg class="r" style="left:903px;top:349px;" width="9" height="8" viewBox="0 0 9 8"><path d="M9 0V8H0Z" fill="#a8a8a8"/></svg>
<div class="t" style="left:769px;top:344.46px;font-size:16px;color:#333;transform:scaleX(1.25);transform-origin:left">-</div>
<div class="t" style="left:785px;top:344.46px;font-size:16px;color:#333;">/</div>
<div class="r" style="left:916px;top:341px;width:13px;height:21px;background:#e6e6e6"></div>
<div class="r" style="left:929px;top:341px;width:158px;height:21px;background:#f7f7f7;border:1px solid #a4a4a4;box-sizing:border-box;"></div>
<svg class="r" style="left:1053px;top:348px;" width="11" height="6" viewBox="0 0 11 6"><path d="M0 0H11L5.5 6Z" fill="#a8a8a8"/></svg>
<svg class="r" style="left:1074px;top:349px;" width="9" height="8" viewBox="0 0 9 8"><path d="M9 0V8H0Z" fill="#a8a8a8"/></svg>
<div class="t" style="left:940px;top:344.46px;font-size:16px;color:#333;transform:scaleX(1.25);transform-origin:left">-</div>
<div class="t" style="left:956px;top:344.46px;font-size:16px;color:#333;">/</div>
<div class="r" style="left:758px;top:364px;width:680px;height:21px;background:#f7f7f7;border:1px solid #a4a4a4;box-sizing:border-box;"></div>
<svg class="r" style="left:1404px;top:371px;" width="11" height="6" viewBox="0 0 11 6"><path d="M0 0H11L5.5 6Z" fill="#a8a8a8"/></svg>
<svg class="r" style="left:1425px;top:372px;" width="9" height="8" viewBox="0 0 9 8"><path d="M9 0V8H0Z" fill="#a8a8a8"/></svg>
<div class="r" style="left:758px;top:387px;width:680px;height:21px;background:#f7f7f7;border:1px solid #a4a4a4;box-sizing:border-box;"></div>
<div class="r" style="left:758px;top:410px;width:131px;height:21px;background:#f7f7f7;border:1px solid #a4a4a4;box-sizing:border-box;"></div>
<svg class="r" style="left:855px;top:417px;" width="11" height="6" viewBox="0 0 11 6"><path d="M0 0H11L5.5 6Z" fill="#a8a8a8"/></svg>
<svg class="r" style="left:876px;top:418px;" width="9" height="8" viewBox="0 0 9 8"><path d="M9 0V8H0Z" fill="#a8a8a8"/></svg>
<div class="r" style="left:889px;top:410px;width:13px;height:21px;background:#e6e6e6"></div>
<div class="r" style="left:902px;top:410px;width:536px;height:21px;background:#f7f7f7;border:1px solid #a4a4a4;box-sizing:border-box;"></div>
<svg class="r" style="left:1404px;top:417px;" width="11" height="6" viewBox="0 0 11 6"><path d="M0 0H11L5.5 6Z" fill="#a8a8a8"/></svg>
<svg class="r" style="left:1425px;top:418px;" width="9" height="8" viewBox="0 0 9 8"><path d="M9 0V8H0Z" fill="#a8a8a8"/></svg>
<div class="r" style="left:758px;top:433px;width:680px;height:21px;background:#f7f7f7;border:1px solid #a4a4a4;box-sizing:border-box;"></div>
<svg class="r" style="left:1404px;top:440px;" width="11" height="6" viewBox="0 0 11 6"><path d="M0 0H11L5.5 6Z" fill="#a8a8a8"/></svg>
<svg class="r" style="left:1422px;top:440px;" width="13" height="7" viewBox="0 0 13 7"><path d="M0 1H13M0 5.5H13" stroke="#a8a8a8" stroke-width="2"/></svg>
<div class="r" style="left:758px;top:456px;width:239px;height:21px;background:#f7f7f7;border:1px solid #a4a4a4;box-sizing:border-box;"></div>
<svg class="r" style="left:963px;top:463px;" width="11" height="6" viewBox="0 0 11 6"><path d="M0 0H11L5.5 6Z" fill="#a8a8a8"/></svg>
<svg class="r" style="left:984px;top:464px;" width="9" height="8" viewBox="0 0 9 8"><path d="M9 0V8H0Z" fill="#a8a8a8"/></svg>
<div class="r" style="left:997px;top:456px;width:13px;height:21px;background:#e6e6e6"></div>
<div class="r" style="left:1010px;top:456px;width:428px;height:21px;background:#f7f7f7;border:1px solid #a4a4a4;box-sizing:border-box;"></div>
<svg class="r" style="left:1404px;top:463px;" width="11" height="6" viewBox="0 0 11 6"><path d="M0 0H11L5.5 6Z" fill="#a8a8a8"/></svg>
<svg class="r" style="left:1425px;top:464px;" width="9" height="8" viewBox="0 0 9 8"><path d="M9 0V8H0Z" fill="#a8a8a8"/></svg>
<div class="r" style="left:758px;top:479px;width:680px;height:21px;background:#f7f7f7;border:1px solid #a4a4a4;box-sizing:border-box;"></div>
<svg class="r" style="left:1404px;top:486px;" width="11" height="6" viewBox="0 0 11 6"><path d="M0 0H11L5.5 6Z" fill="#a8a8a8"/></svg>
<svg class="r" style="left:1422px;top:486px;" width="13" height="7" viewBox="0 0 13 7"><path d="M0 1H13M0 5.5H13" stroke="#a8a8a8" stroke-width="2"/></svg>
<div class="r" style="left:758px;top:502px;width:680px;height:21px;background:#f7f7f7;border:1px solid #a4a4a4;box-sizing:border-box;"></div>
<svg class="r" style="left:1422px;top:509px;" width="11" height="6" viewBox="0 0 11 6"><path d="M0 0H11L5.5 6Z" fill="#a8a8a8"/></svg>
<div class="r" style="left:459px;top:527px;width:990px;height:40px;background:#c8c8c8"></div>
<div class="r" style="left:470px;top:537px;width:21px;height:21px;border:1.3px solid #1e3c6a;box-sizing:border-box"></div>
<svg class="r" style="left:476px;top:541px;" width="9" height="12" viewBox="0 0 9 12"><path d="M2 1.8L6.6 6L2 10.2Z" fill="none" stroke="#1d4f96" stroke-width="1.6" stroke-linejoin="miter"/></svg>
<div class="t" style="left:510px;top:539.07px;font-size:20px;color:#262626;font-weight:bold;letter-spacing:0">Dátum szűrések</div>
<div class="r" style="left:459px;top:573px;width:990px;height:40px;background:#c8c8c8"></div>
<div class="r" style="left:470px;top:583px;width:21px;height:21px;border:1.3px solid #1e3c6a;box-sizing:border-box"></div>
<svg class="r" style="left:476px;top:587px;" width="9" height="12" viewBox="0 0 9 12"><path d="M2 1.8L6.6 6L2 10.2Z" fill="none" stroke="#1d4f96" stroke-width="1.6" stroke-linejoin="miter"/></svg>
<div class="t" style="left:510px;top:585.07px;font-size:20px;color:#262626;font-weight:bold;letter-spacing:0">Állapot szűrések</div>
<svg class="r" style="left:1410px;top:581px;" width="26" height="24" viewBox="0 0 26 24"><path d="M2.9 14.4L8.2 22L23 1.3" fill="none" stroke="#1e1e1e" stroke-width="2.8" stroke-linecap="round" stroke-linejoin="round"/></svg>
<div class="r" style="left:459px;top:619px;width:990px;height:40px;background:#c8c8c8"></div>
<div class="r" style="left:470px;top:629px;width:21px;height:21px;border:1.3px solid #1e3c6a;box-sizing:border-box"></div>
<svg class="r" style="left:476px;top:633px;" width="9" height="12" viewBox="0 0 9 12"><path d="M2 1.8L6.6 6L2 10.2Z" fill="none" stroke="#1d4f96" stroke-width="1.6" stroke-linejoin="miter"/></svg>
<div class="t" style="left:510px;top:631.07px;font-size:20px;color:#262626;font-weight:bold;letter-spacing:0">Egyéb szűrések</div>
<svg class="r" style="left:1410px;top:627px;" width="26" height="24" viewBox="0 0 26 24"><path d="M2.9 14.4L8.2 22L23 1.3" fill="none" stroke="#1e1e1e" stroke-width="2.8" stroke-linecap="round" stroke-linejoin="round"/></svg>
<div class="r" style="left:459px;top:665px;width:990px;height:40px;background:#c8c8c8"></div>
<div class="r" style="left:470px;top:675px;width:21px;height:21px;border:1.3px solid #1e3c6a;box-sizing:border-box"></div>
<svg class="r" style="left:476px;top:679px;" width="9" height="12" viewBox="0 0 9 12"><path d="M2 1.8L6.6 6L2 10.2Z" fill="none" stroke="#1d4f96" stroke-width="1.6" stroke-linejoin="miter"/></svg>
<div class="t" style="left:510px;top:677.07px;font-size:20px;color:#262626;font-weight:bold;letter-spacing:0">További adat szűrések</div>
<div class="r" style="left:459px;top:711px;width:990px;height:40px;background:#c8c8c8"></div>
<div class="r" style="left:470px;top:721px;width:21px;height:21px;border:1.3px solid #1e3c6a;box-sizing:border-box"></div>
<svg class="r" style="left:478px;top:729px;" width="10" height="10" viewBox="0 0 10 10"><path d="M9 0.8V9H0.5Z" fill="#1d54a0"/></svg>
<div class="t" style="left:510px;top:723.07px;font-size:20px;color:#262626;font-weight:bold;letter-spacing:0">Forgalom szűrések</div>
<svg class="r" style="left:1410px;top:719px;" width="26" height="24" viewBox="0 0 26 24"><path d="M2.9 14.4L8.2 22L23 1.3" fill="none" stroke="#1e1e1e" stroke-width="2.8" stroke-linecap="round" stroke-linejoin="round"/></svg>
<div class="t" style="left:468px;top:758.46px;font-size:16px;color:#2e2e2e;">Kommunikáció szűrés:</div>
<div class="t" style="left:468px;top:781.46px;font-size:16px;color:#2e2e2e;">EKÁER Iktatószám:</div>
<div class="t" style="left:468px;top:804.46px;font-size:16px;color:#2e2e2e;">EKÁER szűrés:</div>
<div class="t" style="left:468px;top:827.46px;font-size:16px;color:#2e2e2e;">Komissó bizonylat:</div>
<div class="t" style="left:468px;top:850.46px;font-size:16px;color:#2e2e2e;">Komissó állapot:</div>
<div class="t" style="left:468px;top:873.46px;font-size:16px;color:#2e2e2e;">A rendeléshez van komissó kapcsolva:</div>
<div class="t" style="left:468px;top:896.46px;font-size:16px;color:#2e2e2e;">Komissió szűrés:</div>
<div class="t" style="left:468px;top:919.46px;font-size:16px;color:#2e2e2e;">Fuvar bizonylat:</div>
<div class="t" style="left:468px;top:942.46px;font-size:16px;color:#2e2e2e;">Fuvar szűrés:</div>
<div class="t" style="left:468px;top:965.46px;font-size:16px;color:#2e2e2e;">Ellenőrzésbizonylat:</div>
<div class="t" style="left:468px;top:988.46px;font-size:16px;color:#2e2e2e;">Előlegszámla kapcsolat:</div>
<div class="r" style="left:758px;top:755px;width:428px;height:21px;background:#f7f7f7;border:1px solid #a4a4a4;box-sizing:border-box;"></div>
<svg class="r" style="left:1152px;top:762px;" width="11" height="6" viewBox="0 0 11 6"><path d="M0 0H11L5.5 6Z" fill="#a8a8a8"/></svg>
<svg class="r" style="left:1170px;top:762px;" width="13" height="7" viewBox="0 0 13 7"><path d="M0 1H13M0 5.5H13" stroke="#a8a8a8" stroke-width="2"/></svg>
<div class="r" style="left:1199px;top:755px;width:86px;height:21px;background:#f7f7f7;border:1px solid #a4a4a4;box-sizing:border-box;"></div>
<svg class="r" style="left:1269px;top:762px;" width="11" height="6" viewBox="0 0 11 6"><path d="M0 0H11L5.5 6Z" fill="#a8a8a8"/></svg>
<div class="t" style="left:1201px;top:758.46px;font-size:16px;color:#262626;">Szűrés</div>
<div class="r" style="left:758px;top:778px;width:158px;height:21px;background:#f7f7f7;border:1px solid #a4a4a4;box-sizing:border-box;"></div>
<svg class="r" style="left:882px;top:785px;" width="11" height="6" viewBox="0 0 11 6"><path d="M0 0H11L5.5 6Z" fill="#a8a8a8"/></svg>
<svg class="r" style="left:903px;top:786px;" width="9" height="8" viewBox="0 0 9 8"><path d="M9 0V8H0Z" fill="#a8a8a8"/></svg>
<div class="t" style="left:769px;top:781.46px;font-size:16px;color:#333;transform:scaleX(1.25);transform-origin:left">-</div>
<div class="t" style="left:785px;top:781.46px;font-size:16px;color:#333;">/</div>
<div class="r" style="left:916px;top:778px;width:13px;height:21px;background:#e6e6e6"></div>
<div class="r" style="left:929px;top:778px;width:428px;height:21px;background:#f7f7f7;border:1px solid #a4a4a4;box-sizing:border-box;"></div>
<svg class="r" style="left:1323px;top:785px;" width="11" height="6" viewBox="0 0 11 6"><path d="M0 0H11L5.5 6Z" fill="#a8a8a8"/></svg>
<svg class="r" style="left:1344px;top:786px;" width="9" height="8" viewBox="0 0 9 8"><path d="M9 0V8H0Z" fill="#a8a8a8"/></svg>
<div class="r" style="left:758px;top:801px;width:428px;height:21px;background:#f7f7f7;border:1px solid #a4a4a4;box-sizing:border-box;"></div>
<svg class="r" style="left:1152px;top:808px;" width="11" height="6" viewBox="0 0 11 6"><path d="M0 0H11L5.5 6Z" fill="#a8a8a8"/></svg>
<svg class="r" style="left:1170px;top:808px;" width="13" height="7" viewBox="0 0 13 7"><path d="M0 1H13M0 5.5H13" stroke="#a8a8a8" stroke-width="2"/></svg>
<div class="r" style="left:1199px;top:801px;width:86px;height:21px;background:#f7f7f7;border:1px solid #a4a4a4;box-sizing:border-box;"></div>
<svg class="r" style="left:1269px;top:808px;" width="11" height="6" viewBox="0 0 11 6"><path d="M0 0H11L5.5 6Z" fill="#a8a8a8"/></svg>
<div class="t" style="left:1201px;top:804.46px;font-size:16px;color:#262626;">Szűrés</div>
<div class="r" style="left:758px;top:824px;width:158px;height:21px;background:#f7f7f7;border:1px solid #a4a4a4;box-sizing:border-box;"></div>
<svg class="r" style="left:882px;top:831px;" width="11" height="6" viewBox="0 0 11 6"><path d="M0 0H11L5.5 6Z" fill="#a8a8a8"/></svg>
<svg class="r" style="left:903px;top:832px;" width="9" height="8" viewBox="0 0 9 8"><path d="M9 0V8H0Z" fill="#a8a8a8"/></svg>
<div class="t" style="left:769px;top:827.46px;font-size:16px;color:#333;">/</div>
<div class="t" style="left:784px;top:827.46px;font-size:16px;color:#333;transform:scaleX(1.25);transform-origin:left">-</div>
<div class="r" style="left:916px;top:824px;width:13px;height:21px;background:#e6e6e6"></div>
<div class="r" style="left:929px;top:824px;width:509px;height:21px;background:#f7f7f7;border:1px solid #a4a4a4;box-sizing:border-box;"></div>
<svg class="r" style="left:1404px;top:831px;" width="11" height="6" viewBox="0 0 11 6"><path d="M0 0H11L5.5 6Z" fill="#a8a8a8"/></svg>
<svg class="r" style="left:1425px;top:832px;" width="9" height="8" viewBox="0 0 9 8"><path d="M9 0V8H0Z" fill="#a8a8a8"/></svg>
<div class="r" style="left:758px;top:847px;width:221px;height:21px;background:#f7f7f7;border:1px solid #a4a4a4;box-sizing:border-box;"></div>
<svg class="r" style="left:963px;top:854px;" width="11" height="6" viewBox="0 0 11 6"><path d="M0 0H11L5.5 6Z" fill="#a8a8a8"/></svg>
<div class="r" style="left:758px;top:870px;width:113px;height:21px;background:#f7f7f7;border:1px solid #a4a4a4;box-sizing:border-box;"></div>
<svg class="r" style="left:855px;top:877px;" width="11" height="6" viewBox="0 0 11 6"><path d="M0 0H11L5.5 6Z" fill="#a8a8a8"/></svg>
<div class="t" style="left:760px;top:873.46px;font-size:16px;color:#262626;">Közömbös</div>
<div class="r" style="left:758px;top:893px;width:428px;height:21px;background:#f7f7f7;border:1px solid #a4a4a4;box-sizing:border-box;"></div>
<svg class="r" style="left:1152px;top:900px;" width="11" height="6" viewBox="0 0 11 6"><path d="M0 0H11L5.5 6Z" fill="#a8a8a8"/></svg>
<svg class="r" style="left:1170px;top:900px;" width="13" height="7" viewBox="0 0 13 7"><path d="M0 1H13M0 5.5H13" stroke="#a8a8a8" stroke-width="2"/></svg>
<div class="r" style="left:1199px;top:893px;width:86px;height:21px;background:#f7f7f7;border:1px solid #a4a4a4;box-sizing:border-box;"></div>
<svg class="r" style="left:1269px;top:900px;" width="11" height="6" viewBox="0 0 11 6"><path d="M0 0H11L5.5 6Z" fill="#a8a8a8"/></svg>
<div class="t" style="left:1201px;top:896.46px;font-size:16px;color:#262626;">Szűrés</div>
<div class="r" style="left:758px;top:916px;width:158px;height:21px;background:#f7f7f7;border:1px solid #a4a4a4;box-sizing:border-box;"></div>
<svg class="r" style="left:882px;top:923px;" width="11" height="6" viewBox="0 0 11 6"><path d="M0 0H11L5.5 6Z" fill="#a8a8a8"/></svg>
<svg class="r" style="left:903px;top:924px;" width="9" height="8" viewBox="0 0 9 8"><path d="M9 0V8H0Z" fill="#a8a8a8"/></svg>
<div class="t" style="left:769px;top:919.46px;font-size:16px;color:#333;">/</div>
<div class="t" style="left:784px;top:919.46px;font-size:16px;color:#333;transform:scaleX(1.25);transform-origin:left">-</div>
<div class="r" style="left:916px;top:916px;width:13px;height:21px;background:#e6e6e6"></div>
<div class="r" style="left:929px;top:916px;width:509px;height:21px;background:#f7f7f7;border:1px solid #a4a4a4;box-sizing:border-box;"></div>
<svg class="r" style="left:1404px;top:923px;" width="11" height="6" viewBox="0 0 11 6"><path d="M0 0H11L5.5 6Z" fill="#a8a8a8"/></svg>
<svg class="r" style="left:1425px;top:924px;" width="9" height="8" viewBox="0 0 9 8"><path d="M9 0V8H0Z" fill="#a8a8a8"/></svg>
<div class="r" style="left:758px;top:939px;width:428px;height:21px;background:#f7f7f7;border:1px solid #a4a4a4;box-sizing:border-box;"></div>
<svg class="r" style="left:1152px;top:946px;" width="11" height="6" viewBox="0 0 11 6"><path d="M0 0H11L5.5 6Z" fill="#a8a8a8"/></svg>
<svg class="r" style="left:1170px;top:946px;" width="13" height="7" viewBox="0 0 13 7"><path d="M0 1H13M0 5.5H13" stroke="#a8a8a8" stroke-width="2"/></svg>
<div class="r" style="left:1199px;top:939px;width:86px;height:21px;background:#f7f7f7;border:1px solid #a4a4a4;box-sizing:border-box;"></div>
<svg class="r" style="left:1269px;top:946px;" width="11" height="6" viewBox="0 0 11 6"><path d="M0 0H11L5.5 6Z" fill="#a8a8a8"/></svg>
<div class="t" style="left:1201px;top:942.46px;font-size:16px;color:#262626;">Szűrés</div>
<div class="r" style="left:758px;top:962px;width:113px;height:21px;background:#f7f7f7;border:1px solid #a4a4a4;box-sizing:border-box;"></div>
<svg class="r" style="left:855px;top:969px;" width="11" height="6" viewBox="0 0 11 6"><path d="M0 0H11L5.5 6Z" fill="#a8a8a8"/></svg>
<div class="t" style="left:760px;top:965.46px;font-size:16px;color:#262626;">Közömbös</div>
<div class="r" style="left:758px;top:985px;width:221px;height:21px;background:#f7f7f7;border:1px solid #a4a4a4;box-sizing:border-box;"></div>
<svg class="r" style="left:963px;top:992px;" width="11" height="6" viewBox="0 0 11 6"><path d="M0 0H11L5.5 6Z" fill="#a8a8a8"/></svg>
<div class="t" style="left:760px;top:988.46px;font-size:16px;color:#262626;">Van és kiegyenlített</div>
<div class="r" style="left:459px;top:1010px;width:990px;height:40px;background:#c8c8c8"></div>
<div class="r" style="left:470px;top:1020px;width:21px;height:21px;border:1.3px solid #1e3c6a;box-sizing:border-box"></div>
<svg class="r" style="left:476px;top:1024px;" width="9" height="12" viewBox="0 0 9 12"><path d="M2 1.8L6.6 6L2 10.2Z" fill="none" stroke="#1d4f96" stroke-width="1.6" stroke-linejoin="miter"/></svg>
<div class="t" style="left:510px;top:1022.07px;font-size:20px;color:#262626;font-weight:bold;letter-spacing:0">Extramező szűrés</div>
<svg class="r" style="left:1410px;top:1018px;" width="26" height="24" viewBox="0 0 26 24"><path d="M2.9 14.4L8.2 22L23 1.3" fill="none" stroke="#1e1e1e" stroke-width="2.8" stroke-linecap="round" stroke-linejoin="round"/></svg>
<div class="r" style="left:458px;top:979px;width:531px;height:35px;border:3px solid #e8101a;box-sizing:border-box;border-radius:2px"></div>
<div class="r" style="left:1455px;top:1035px;width:21px;height:21px;background:linear-gradient(#f4f4f4,#e8e8e8)"></div>
<svg class="r" style="left:1457px;top:1037px;" width="17" height="17" viewBox="0 0 17 17"><path d="M2 10L6 14L15 2" fill="none" stroke="#4aaa8a" stroke-width="1.8"/></svg>
<div class="r" style="left:455px;top:1058px;width:139px;height:22px;background:#f2f4f6"></div>
<div class="t" style="left:461px;top:1061.06px;font-size:16px;color:#1e4f90;">F3:<span style="margin-left:2.5px">Mezők ürítése</span></div>
<div class="r" style="left:597px;top:1058px;width:95px;height:22px;background:#f2f4f6"></div>
<div class="t" style="left:603px;top:1061.06px;font-size:16px;color:#1e4f90;">F4:<span style="margin-left:2.5px">Betöltés</span></div>
<div class="r" style="left:694px;top:1058px;width:91px;height:22px;background:#f2f4f6"></div>
<div class="t" style="left:700px;top:1061.06px;font-size:16px;color:#1e4f90;">F5:<span style="margin-left:2.5px">Mentés</span></div>
</body></html>
